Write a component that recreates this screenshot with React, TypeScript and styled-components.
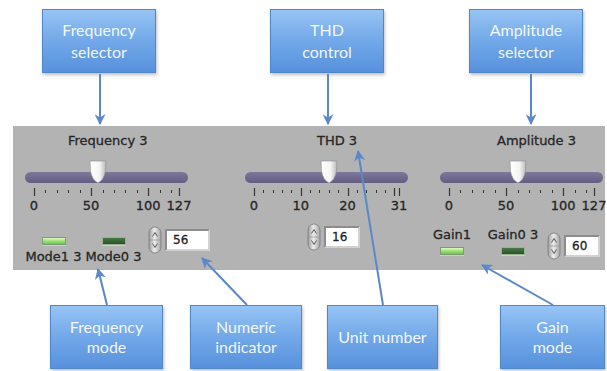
import React from 'react';
import styled, { createGlobalStyle } from 'styled-components';

const GlobalStyle = createGlobalStyle`
  html, body {
    margin: 0;
    padding: 0;
    background: #fff;
  }
  body {
    font-family: "DejaVu Sans", sans-serif;
  }
`;

const Page = styled.div`
  position: relative;
  width: 607px;
  height: 371px;
  overflow: hidden;
  background: #fff;
`;

const CalloutRow = styled.div<{ $height: number; $top: number }>`
  display: flex;
  align-items: flex-start;
  box-sizing: border-box;
  height: ${(p) => p.$height}px;
  padding-top: ${(p) => p.$top}px;
`;

const Callout = styled.div<{ $ml: number; $width: number; $lh: number }>`
  box-sizing: border-box;
  flex: none;
  width: ${(p) => p.$width}px;
  height: 64px;
  margin-left: ${(p) => p.$ml}px;
  display: flex;
  align-items: center;
  justify-content: center;
  text-align: center;
  font-family: Lato, "Open Sans", sans-serif;
  font-size: 16px;
  line-height: ${(p) => p.$lh}px;
  color: rgba(255, 255, 255, 0.92);
  background: linear-gradient(to bottom, #96c4f4 0%, #75abea 45%, #5891dc 100%);
  border: 1px solid #5086cb;
  box-shadow: 1px 2px 3px rgba(0, 0, 0, 0.25);
`;

const Panel = styled.div`
  display: flex;
  box-sizing: border-box;
  margin-left: 13px;
  width: 592px;
  height: 144px;
  padding-left: 12px;
  background: #b3b3b3;
  font-family: "DejaVu Sans", sans-serif;
  font-size: 13px;
  color: #262626;
  -webkit-text-stroke: 0.3px #262626;
`;

const Group = styled.div<{ $ml: number; $width: number }>`
  display: flex;
  flex-direction: column;
  flex: none;
  width: ${(p) => p.$width}px;
  margin-left: ${(p) => p.$ml}px;
`;

const Title = styled.div<{ $indent: number }>`
  margin-top: 7px;
  height: 16px;
  line-height: 16px;
  padding-left: ${(p) => p.$indent}px;
  white-space: nowrap;
`;

const SliderBox = styled.div<{ $ml: number }>`
  position: relative;
  width: 163px;
  margin-top: 11px;
  margin-left: ${(p) => p.$ml}px;
`;

const Track = styled.div`
  margin-top: 12px;
  height: 11px;
  border-radius: 6px;
  background: linear-gradient(to bottom, #7d7999, #625d82);
`;

const Thumb = styled.svg`
  position: absolute;
  top: 0;
  margin-left: -9px;
`;

const Scale = styled.svg`
  display: block;
  margin-top: 5px;
`;

const ScaleLabels = styled.div`
  position: relative;
  height: 14px;
  margin-top: 3px;
`;

const ScaleLabel = styled.span`
  position: absolute;
  top: 0;
  transform: translateX(-50%);
  line-height: 14px;
`;

const ControlRow = styled.div<{ $mt: number }>`
  display: flex;
  align-items: flex-start;
  margin-top: ${(p) => p.$mt}px;
`;

const LedColumn = styled.div<{ $width: number; $ml?: number; $pt?: number }>`
  display: flex;
  flex-direction: column;
  align-items: center;
  gap: 5px;
  width: ${(p) => p.$width}px;
  margin-left: ${(p) => p.$ml ?? 0}px;
  padding-top: ${(p) => p.$pt ?? 0}px;
`;

const LedLabel = styled.div`
  line-height: 14px;
  white-space: nowrap;
`;

const Led = styled.div<{ $on: boolean }>`
  box-sizing: border-box;
  width: 24px;
  height: 8px;
  border: 1px solid ${(p) => (p.$on ? '#7f9c70' : '#98b28f')};
  background: ${(p) =>
    p.$on
      ? 'linear-gradient(to bottom, #e0f8c8, #95e070 55%, #6cc84c)'
      : 'linear-gradient(to bottom, #477843, #2b5329)'};
  box-shadow: 0 1px 0 rgba(255, 255, 255, 0.35);
`;

const Field = styled.div<{ $ml: number; $mt?: number }>`
  display: flex;
  align-items: center;
  gap: 3px;
  margin-left: ${(p) => p.$ml}px;
  margin-top: ${(p) => p.$mt ?? 0}px;
`;

const NumBox = styled.div<{ $width: number }>`
  box-sizing: border-box;
  width: ${(p) => p.$width}px;
  height: 22px;
  padding-left: 6px;
  background: #fff;
  border: 2px solid;
  border-color: #8c8c8c #d2d2d2 #d2d2d2 #8c8c8c;
  font-size: 12px;
  line-height: 18px;
  color: #222;
`;

const Overlay = styled.svg`
  position: absolute;
  left: 0;
  top: 0;
  pointer-events: none;
`;

type SliderProps = {
  min: number;
  max: number;
  value: number;
  ticks: number[];
  majors: number[];
  labels: number[];
  ml: number;
};

const span = 145;
const inset = 9;

function Slider({ min, max, value, ticks, majors, labels, ml }: SliderProps) {
  const pos = (v: number) => inset + ((v - min) / (max - min)) * span;
  return (
    <SliderBox $ml={ml}>
      <Track />
      <Thumb width="18" height="24" viewBox="0 0 18 24" style={{ left: pos(value) }}>
        <defs>
          <linearGradient id={`th${max}`} x1="0" x2="1" y1="0" y2="0">
            <stop offset="0" stopColor="#ffffff" />
            <stop offset="0.6" stopColor="#f4f4f4" />
            <stop offset="1" stopColor="#b9b9b9" />
          </linearGradient>
        </defs>
        <path
          d="M1 1 L17 1 L16.5 11 Q15 20 9 23 Q3 20 1.5 11 Z"
          fill={`url(#th${max})`}
          stroke="#8d8d8d"
          strokeWidth="0.6"
        />
      </Thumb>
      <Scale width="163" height="8">
        {ticks.map((t) => {
          const major = majors.includes(t);
          const x = Math.round(pos(t)) + 0.5;
          return (
            <line
              key={t}
              x1={x}
              x2={x}
              y1={major ? 0 : 2}
              y2={major ? 8 : 5}
              stroke="#333"
              strokeWidth={major ? 1.2 : 1}
            />
          );
        })}
      </Scale>
      <ScaleLabels>
        {labels.map((l) => (
          <ScaleLabel key={l} style={{ left: pos(l) }}>
            {l}
          </ScaleLabel>
        ))}
      </ScaleLabels>
    </SliderBox>
  );
}

function Spinner() {
  return (
    <svg width="14" height="28" viewBox="0 0 14 28">
      <defs>
        <linearGradient id="spin" x1="0" x2="1" y1="0" y2="0">
          <stop offset="0" stopColor="#9a9a9a" />
          <stop offset="0.45" stopColor="#ececec" />
          <stop offset="1" stopColor="#a4a4a4" />
        </linearGradient>
      </defs>
      <rect x="1" y="1" width="12" height="26" rx="6" fill="url(#spin)" stroke="#7b7b7b" strokeWidth="0.8" />
      <line x1="1.5" y1="14" x2="12.5" y2="14" stroke="#8a8a8a" strokeWidth="0.6" />
      <path d="M4.5 10.5 L7 6.5 L9.5 10.5" fill="none" stroke="#555" strokeWidth="1" />
      <path d="M4.5 17.5 L7 21.5 L9.5 17.5" fill="none" stroke="#555" strokeWidth="1" />
    </svg>
  );
}

const range = (from: number, to: number, step: number) => {
  const out: number[] = [];
  for (let v = from; v <= to; v += step) out.push(v);
  return out;
};

const wideTicks = [...range(0, 120, 10), 127];
const thdTicks = [...range(0, 30, 2), 31];

const arrows = [
  [100, 74, 100, 124],
  [328, 74, 328, 124],
  [531, 74, 531, 124],
  [107, 305, 98, 269],
  [247, 305, 202, 258],
  [383, 305, 358, 151],
  [553, 305, 482, 265],
];

export default function App() {
  return (
    <Page>
      <GlobalStyle />
      <CalloutRow $height={126} $top={9}>
        <Callout $ml={42} $width={114} $lh={22}>
          Frequency
          <br />
          selector
        </Callout>
        <Callout $ml={114} $width={114} $lh={22}>
          THD
          <br />
          control
        </Callout>
        <Callout $ml={85} $width={114} $lh={22}>
          Amplitude
          <br />
          selector
        </Callout>
      </CalloutRow>

      <Panel>
        <Group $ml={0} $width={190}>
          <Title $indent={43}>Frequency 3</Title>
          <Slider min={0} max={127} value={56} ticks={wideTicks} majors={[0, 50, 100, 127]} labels={[0, 50, 100, 127]} ml={0} />
          <ControlRow $mt={13}>
            <LedColumn $width={57} $pt={11}>
              <Led $on />
              <LedLabel>Mode1 3</LedLabel>
            </LedColumn>
            <LedColumn $width={57} $ml={3} $pt={11}>
              <Led $on={false} />
              <LedLabel>Mode0 3</LedLabel>
            </LedColumn>
            <Field $ml={6}>
              <Spinner />
              <NumBox $width={45}>56</NumBox>
            </Field>
          </ControlRow>
        </Group>

        <Group $ml={30} $width={163}>
          <Title $indent={72}>THD 3</Title>
          <Slider min={0} max={31} value={16} ticks={thdTicks} majors={[0, 10, 20, 30, 31]} labels={[0, 10, 20, 31]} ml={0} />
          <ControlRow $mt={10}>
            <Field $ml={62}>
              <Spinner />
              <NumBox $width={36}>16</NumBox>
            </Field>
          </ControlRow>
        </Group>

        <Group $ml={24} $width={173}>
          <Title $indent={65}>Amplitude 3</Title>
          <Slider min={0} max={127} value={60} ticks={wideTicks} majors={[0, 50, 100, 127]} labels={[0, 50, 100, 127]} ml={8} />
          <ControlRow $mt={15}>
            <LedColumn $width={40}>
              <LedLabel>Gain1</LedLabel>
              <Led $on />
            </LedColumn>
            <LedColumn $width={52} $ml={15}>
              <LedLabel>Gain0 3</LedLabel>
              <Led $on={false} />
            </LedColumn>
            <Field $ml={8} $mt={4}>
              <Spinner />
              <NumBox $width={36}>60</NumBox>
            </Field>
          </ControlRow>
        </Group>
      </Panel>

      <CalloutRow $height={101} $top={35}>
        <Callout $ml={50} $width={113} $lh={20}>
          Frequency
          <br />
          mode
        </Callout>
        <Callout $ml={27} $width={112} $lh={20}>
          Numeric
          <br />
          indicator
        </Callout>
        <Callout $ml={25} $width={111} $lh={20}>
          Unit number
        </Callout>
        <Callout $ml={62} $width={105} $lh={20}>
          Gain
          <br />
          mode
        </Callout>
      </CalloutRow>

      <Overlay width="607" height="371">
        <defs>
          <marker id="head" viewBox="0 0 10 10" refX="9" refY="5" markerWidth="5.5" markerHeight="5.5" orient="auto">
            <path d="M0 0 L10 5 L0 10 L3 5 Z" fill="#5a89c9" />
          </marker>
        </defs>
        {arrows.map(([x1, y1, x2, y2], i) => (
          <line key={i} x1={x1} y1={y1} x2={x2} y2={y2} stroke="#5a89c9" strokeWidth="2" markerEnd="url(#head)" />
        ))}
      </Overlay>
    </Page>
  );
}
